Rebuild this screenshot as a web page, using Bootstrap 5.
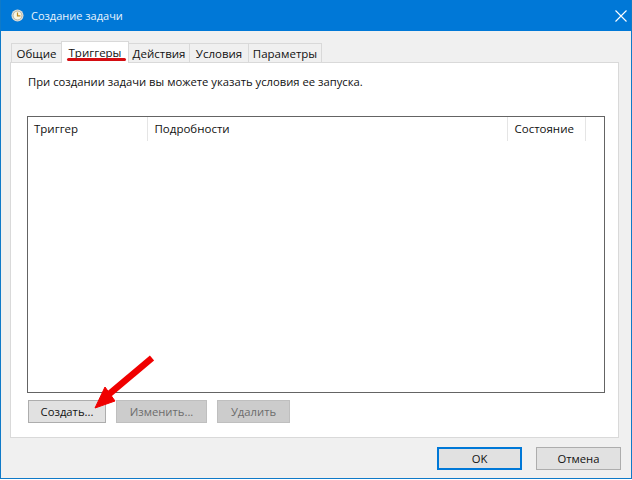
<!DOCTYPE html>
<html lang="ru">
<head>
<meta charset="utf-8">
<title>Создание задачи</title>
<link href="https://cdn.jsdelivr.net/npm/bootstrap@5.3.0/dist/css/bootstrap.min.css" rel="stylesheet">
<style>
html,body{height:480px;overflow:hidden;background:#fff}
body{font-family:"Open Sans",Roboto,"Liberation Sans",sans-serif;font-size:11.25px;color:#111;line-height:16px}
.dlg{width:632px;height:479px;border:1px solid #0f7ac8;border-top:0;background:#f0f0f0;position:relative}
.ttl{height:31px;background:#0078d7;color:#e8f3fc;padding-left:10px;gap:7px;font-size:11px}
.clk{width:13px;height:13px;flex:none}
.cls{width:12px;height:12px;margin-right:4px;margin-left:auto}
.tabarea{padding:10px 12px 0 9px;height:407px}
.tabs{border:0;margin-left:2px;height:21px;align-items:flex-end;position:relative;z-index:1}
.tabs .nav-link{border:1px solid #d9d9d9;border-bottom:0;border-radius:0;background:#f0f0f0;color:#111;height:19px;padding:2px 0 0;text-align:center;margin:0 0 0 -1px;font-size:11.5px;line-height:16px}
.tabs .nav-link.active{height:22px;background:#fff;border-color:#d9d9d9;color:#111;padding-top:3px;margin-bottom:-1px}
.t1{width:51px}.t2{width:68px}.t3{width:62px}.t4{width:60px}.t5{width:74px}
.pane{height:376px;border:1px solid #d9d9d9;background:#fff;padding:11px 13px 0 16px}
.intro{height:42px;margin:0;padding-left:1px}
.grid{height:277px;border:1px solid #646464;background:#fff}
.grid .table{width:auto;table-layout:fixed;margin:0;--bs-table-bg:transparent}
.grid th{font-weight:400;height:24px;padding:4px 0 4px 6px;border:0;border-right:1px solid #e5e5e5;color:#111;font-size:11.5px;line-height:16px;vertical-align:top}
.grid th.c2,.grid th.c3{padding-left:7px}
.c1{width:119px}.c2{width:360px}.c3{width:78px}
.acts{padding:7px 0 0 1px;gap:10px}
.wbtn{height:23px;border:1px solid #adadad;background:#e1e1e1;color:#111;font-size:11.25px;line-height:16px;padding:0;border-radius:0}
.wbtn:disabled{background:#cccccc;border-color:#bfbfbf;color:#6d6d6d;opacity:1}
.b1{width:78px}.b2{width:91px}.b3{width:73px}
.foot{padding:9px 10px 0 0;gap:14px}
.b4,.b5{width:85px;height:23px}
.b4{border:2px solid #0078d7}
.underline{position:absolute;left:66px;top:58px;width:59px;height:3px;background:#d40d12;border-radius:2px;z-index:2}
.arrow{position:absolute;left:85px;top:350px;z-index:3}
</style>
</head>
<body>
<div class="dlg">
  <div class="ttl d-flex align-items-center">
    <svg class="clk" viewBox="0 0 16 16"><circle cx="8" cy="8" r="7.4" fill="#dcdcd6"/><circle cx="8" cy="8" r="5.4" fill="#fbf6e2" stroke="#9c9c92" stroke-width=".8"/><path d="M8 4.2V8.4H11.6" fill="none" stroke="#c08a1e" stroke-width="1.5"/></svg>
    <span>Создание задачи</span>
    <svg class="cls" viewBox="0 0 12 12"><path d="M.5.5 11.5 11.5M11.5.5.5 11.5" stroke="#fff" stroke-width="1.1" fill="none"/></svg>
  </div>
  <div class="tabarea">
    <ul class="nav nav-tabs tabs">
      <li class="nav-item"><a class="nav-link t1" href="#">Общие</a></li>
      <li class="nav-item"><a class="nav-link t2 active" href="#">Триггеры</a></li>
      <li class="nav-item"><a class="nav-link t3" href="#">Действия</a></li>
      <li class="nav-item"><a class="nav-link t4" href="#">Условия</a></li>
      <li class="nav-item"><a class="nav-link t5" href="#">Параметры</a></li>
    </ul>
    <div class="pane">
      <p class="intro">При создании задачи вы можете указать условия ее запуска.</p>
      <div class="grid">
        <table class="table">
          <thead><tr><th class="c1">Триггер</th><th class="c2">Подробности</th><th class="c3">Состояние</th></tr></thead>
        </table>
      </div>
      <div class="acts d-flex">
        <button class="btn wbtn b1" type="button">Создать...</button>
        <button class="btn wbtn b2" type="button" disabled>Изменить...</button>
        <button class="btn wbtn b3" type="button" disabled>Удалить</button>
      </div>
    </div>
  </div>
  <div class="foot d-flex justify-content-end">
    <button class="btn wbtn b4" type="button">OK</button>
    <button class="btn wbtn b5" type="button">Отмена</button>
  </div>
  <div class="underline"></div>
  <svg class="arrow" width="72" height="62" viewBox="0 0 72 62"><path d="M66 8 22 45" stroke="#f00000" stroke-width="6.5" fill="none"/><path d="M9 58 19 37 29 51Z" fill="#f00000" stroke="#f00000"/></svg>
</div>
</body>
</html>
